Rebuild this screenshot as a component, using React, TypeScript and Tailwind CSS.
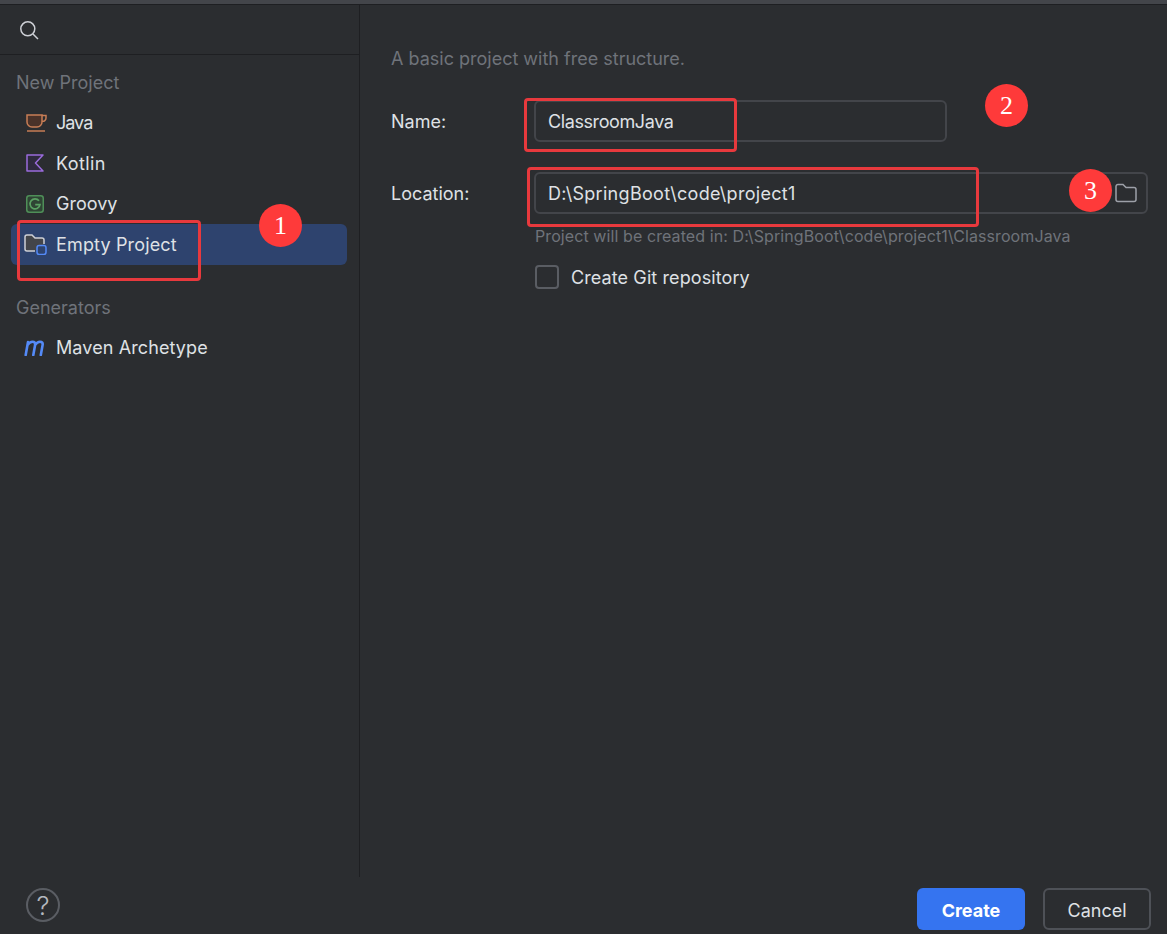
const font = { fontFamily: '"Inter", "Noto Sans", sans-serif' };

function JavaIcon() {
  return (
    <svg className="ml-[2px]" width="21" height="18" viewBox="0 0 21 18" fill="none">
      <path d="M1 1h15v7a5 5 0 0 1-5 5H6a5 5 0 0 1-5-5z" fill="#4a3229" stroke="#c77d55" strokeWidth="1.5" />
      <path d="M16 1.500h4v2.500a3.200 3.200 0 0 1-4 3.200" stroke="#c77d55" strokeWidth="1.500" />
      <path d="M1 17h18" stroke="#c77d55" strokeWidth="1.500" />
    </svg>
  );
}

function KotlinIcon() {
  return (
    <svg className="ml-[2px]" width="18" height="18" viewBox="0 0 18 18" fill="none">
      <path d="M1 1h16L9.500 9l7.500 8H1z" fill="#2f2a3f" stroke="#9a6bdc" strokeWidth="1.500" strokeLinejoin="round" />
    </svg>
  );
}

function GroovyIcon() {
  return (
    <svg className="ml-[2px]" width="18" height="18" viewBox="0 0 18 18" fill="none">
      <rect x="0.750" y="0.750" width="16.500" height="16.500" rx="2.500" fill="#2f4534" stroke="#4f8f58" strokeWidth="1.500" />
      <path d="M13 5.800a5 5 0 1 0 1 3.900H9.200" stroke="#5aa163" strokeWidth="1.700" />
    </svg>
  );
}

function FolderBlueIcon() {
  return (
    <svg width="23" height="21" viewBox="0 0 23 21" fill="none">
      <path d="M11 17H3a2 2 0 0 1-2-2V3a2 2 0 0 1 2-2h5l3 3h7a2 2 0 0 1 2 2v4" fill="#43454a" stroke="#ced0d6" strokeWidth="1.500" />
      <rect x="13" y="11.500" width="9" height="9" rx="2.200" fill="#2e436e" stroke="#548af7" strokeWidth="1.500" />
    </svg>
  );
}

function MavenIcon() {
  return (
    <svg width="23" height="16" viewBox="0 0 23 16" fill="none">
      <path d="M1.700 15L4 2M3.500 5C5 2.800 6.700 1.700 8.500 1.700c2.100 0 3 1.300 2.600 3.300L9.300 15M11 5c1.500-2.200 3.200-3.300 5-3.300 2.100 0 3 1.300 2.600 3.300L16.800 15" stroke="#548af7" strokeWidth="2.600" strokeLinecap="round" />
    </svg>
  );
}

function SidebarRow({ icon, label, active, tracking }: { icon: React.ReactNode; label: string; active?: boolean; tracking?: string }) {
  return (
    <div className={`ml-[11px] mr-[12px] h-[40.6px] rounded-[6px] flex items-center pl-[13px] ${active ? "bg-[#2e436e]" : ""}`}>
      <span className="w-[32px] flex items-center">{icon}</span>
      <span className={`text-[18px] text-[#dfe1e5] ${tracking ?? ""}`}>{label}</span>
    </div>
  );
}

function Marker({ n, className }: { n: number; className: string }) {
  return (
    <div
      className={`absolute w-[43px] h-[43px] rounded-full bg-[#fe3a3a] text-white flex items-center justify-center text-[26px] ${className}`}
      style={{ fontFamily: '"Liberation Serif", serif' }}
    >
      {n}
    </div>
  );
}

export default function App() {
  return (
    <div className="relative w-[1167px] h-[934px] overflow-hidden bg-[#2b2d30] flex flex-col" style={font}>
      <div className="h-[5px] bg-[#43454a] border-b border-[#1e1f22] shrink-0" />

      <div className="flex h-[872px] shrink-0">
        {/* Sidebar */}
        <div className="w-[360px] shrink-0 border-r border-[#1e1f22]">
          <div className="h-[50px] border-b border-[#1e1f22] flex items-center pl-[19px]">
            <svg width="20" height="20" viewBox="0 0 20 20" fill="none">
              <circle cx="8.800" cy="8.800" r="7" stroke="#ced0d6" strokeWidth="1.500" />
              <path d="M14 14l5 5" stroke="#ced0d6" strokeWidth="1.500" />
            </svg>
          </div>
          <div className="h-[27px] mt-[14px] pl-[16px] flex items-center text-[18px] text-[#6f737a]">New Project</div>
          <div className="mt-[6.5px]">
            <SidebarRow icon={<JavaIcon />} label="Java" tracking="tracking-[-1px]" />
            <SidebarRow icon={<KotlinIcon />} label="Kotlin" tracking="tracking-[0.4px]" />
            <SidebarRow icon={<GroovyIcon />} label="Groovy" />
            <SidebarRow icon={<FolderBlueIcon />} label="Empty Project" active tracking="tracking-[0.15px]" />
          </div>
          <div className="h-[27px] mt-[29.5px] pl-[16px] flex items-center text-[18px] text-[#6f737a]">Generators</div>
          <div className="mt-[6px]">
            <SidebarRow icon={<MavenIcon />} label="Maven Archetype" tracking="tracking-[0.1px]" />
          </div>
        </div>

        {/* Form */}
        <div className="flex-1 pl-[31px] pt-[40px]">
          <div className="text-[18px] leading-[27px] text-[#6f737a]">A basic project with free structure.</div>
          <div className="flex items-center mt-[28px]">
            <span className="w-[143px] text-[18px] text-[#dfe1e5]">Name:</span>
            <div className="w-[413px] h-[42px] rounded-[6px] border-2 border-[#43454a] flex items-center pl-[12px] text-[18px] tracking-[-0.4px] text-[#dfe1e5]">
              ClassroomJava
            </div>
          </div>
          <div className="flex items-center mt-[30px]">
            <span className="w-[143px] text-[18px] text-[#dfe1e5]">Location:</span>
            <div className="w-[614px] h-[42px] rounded-[6px] border-2 border-[#43454a] flex items-center justify-between pl-[12px] pr-[8px] text-[18px] text-[#dfe1e5]">
              <span className="tracking-[0.3px]">D:\SpringBoot\code\project1</span>
              <svg width="24" height="20" viewBox="0 0 24 20" fill="none">
                <path d="M2 16.500V3.500A2 2 0 0 1 4 1.500h5l3 3h8a2 2 0 0 1 2 2v10a2 2 0 0 1-2 2H4a2 2 0 0 1-2-2z" stroke="#9da0a8" strokeWidth="1.500" />
              </svg>
            </div>
          </div>
          <div className="ml-[144px] mt-[10px] text-[16px] leading-[24px] tracking-[0.09px] text-[#6f737a]">
            Project will be created in: D:\SpringBoot\code\project1\ClassroomJava
          </div>
          <div className="ml-[144px] mt-[15px] flex items-center">
            <div className="w-[24px] h-[24px] rounded-[4px] border-2 border-[#5a5d63]" />
            <span className="ml-[12px] text-[18px] tracking-[0.1px] text-[#dfe1e5] translate-y-[1px]">Create Git repository</span>
          </div>
        </div>
      </div>

      {/* Footer */}
      <div className="flex-1 flex items-center justify-between pl-[26px] pr-[16px] pt-[7px]">
        <div className="w-[34px] h-[34px] mb-[8px] rounded-full border-2 border-[#5a5d63] flex items-center justify-center text-[26px] font-light text-[#b4b8bf]">
          ?
        </div>
        <div className="flex items-center gap-[18px]">
          <div className="w-[108px] h-[42px] pt-[2px] rounded-[6px] bg-[#3574f0] flex items-center justify-center text-[18px] font-bold text-white">
            Create
          </div>
          <div className="w-[108px] h-[42px] pt-[2px] rounded-[6px] border-2 border-[#4e5157] flex items-center justify-center text-[18px] text-[#dfe1e5]">
            Cancel
          </div>
        </div>
      </div>

      {/* annotations drawn over the dialog */}
      <div className="absolute left-[17px] top-[220px] w-[184px] h-[61px] rounded-[4px] border-[3px] border-[#e8393d]" />
      <div className="absolute left-[524px] top-[98px] w-[213px] h-[54px] rounded-[4px] border-[3px] border-[#e8393d]" />
      <div className="absolute left-[527px] top-[167px] w-[452px] h-[60px] rounded-[4px] border-[3px] border-[#e8393d]" />
      <Marker n={1} className="left-[259px] top-[204px]" />
      <Marker n={2} className="left-[985px] top-[84px]" />
      <Marker n={3} className="left-[1069px] top-[169px]" />
    </div>
  );
}
